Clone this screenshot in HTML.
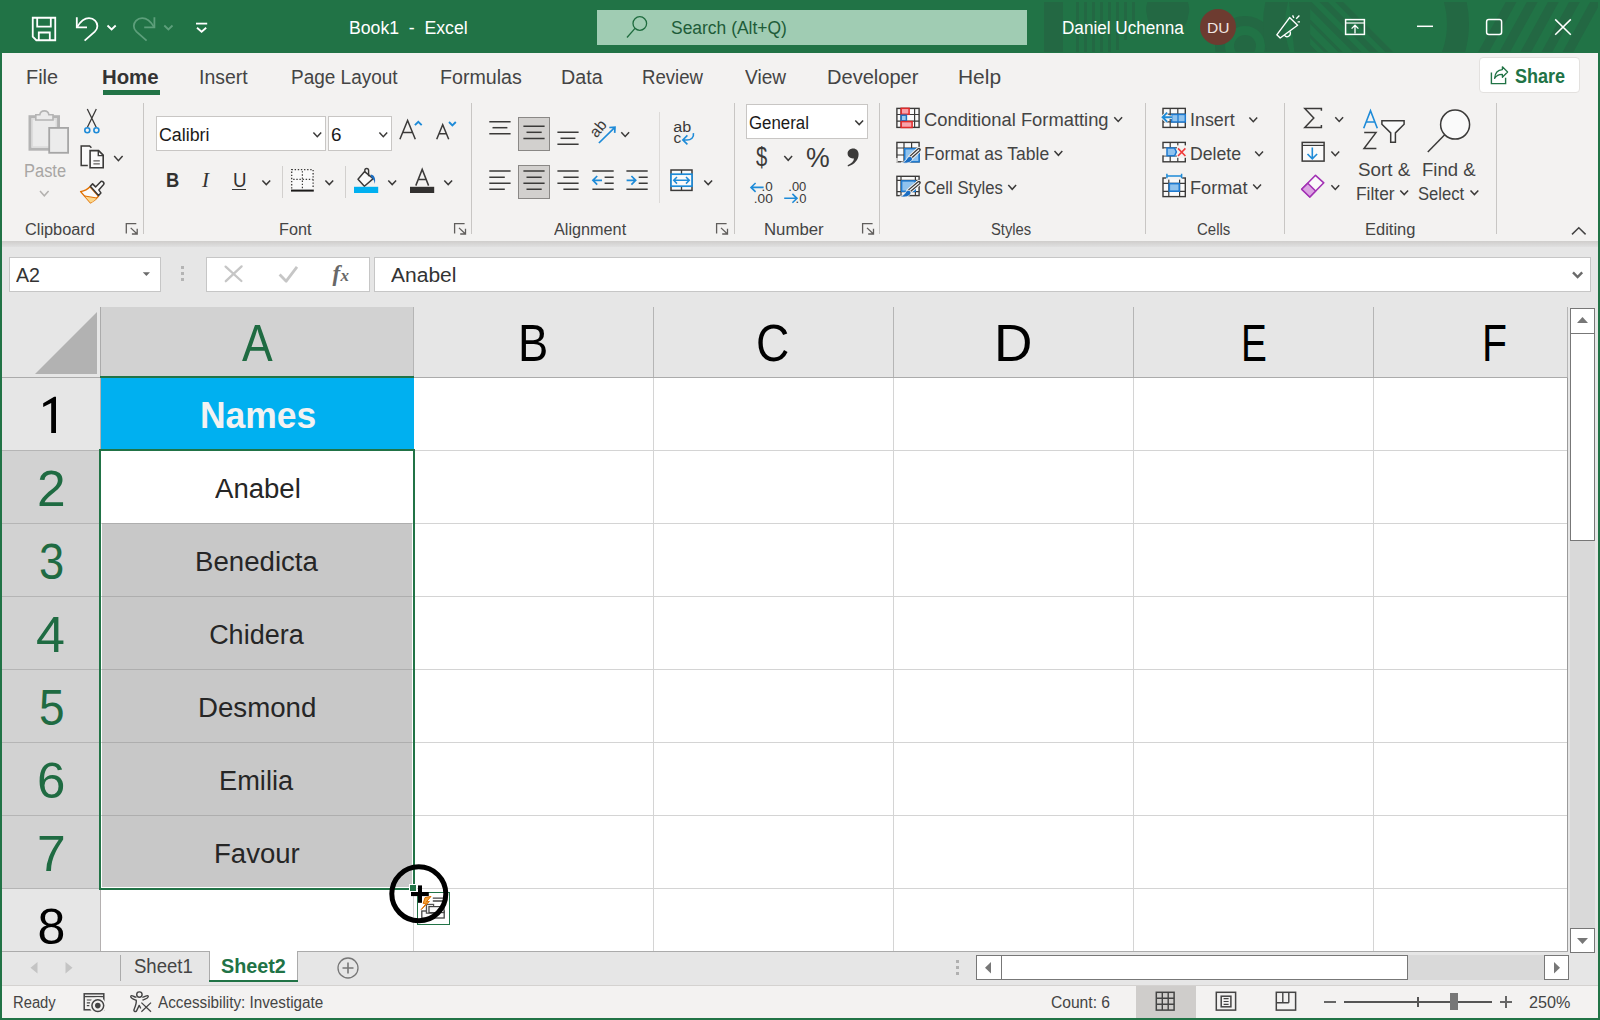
<!DOCTYPE html>
<html><head><meta charset="utf-8"><title>Book1 - Excel</title>
<style>
html,body{margin:0;padding:0}
body{width:1600px;height:1020px;overflow:hidden;position:relative;background:#fff;font-family:"Liberation Sans",sans-serif}
#w{position:absolute;left:0;top:0;width:1600px;height:1020px;overflow:hidden}
#w div,#w svg,#w span{position:absolute}
.t{white-space:pre;line-height:1;transform-origin:0 50%}
svg{overflow:visible}
</style></head>
<body><div id="w">
<div style="left:0px;top:0px;width:1600px;height:1020px;background:#217346;"></div>
<svg style="left:0;top:0" width="1600" height="53" viewBox="0 0 1600 53"><defs><clipPath id="tb"><rect x="2" y="2" width="1596" height="50"/></clipPath></defs><g clip-path="url(#tb)"><g fill="#236843"><rect x="1044" y="2" width="19" height="50"/><rect x="1076" y="2" width="3" height="50"/><rect x="1084" y="2" width="3" height="50"/><rect x="1092" y="2" width="3" height="50"/><rect x="1100" y="2" width="3" height="50"/><rect x="1108" y="2" width="3" height="50"/><rect x="1116" y="2" width="3" height="48"/><rect x="1124" y="2" width="3" height="38"/><rect x="1132" y="2" width="3" height="21"/><path d="M1147.5 2H1187.8A20.7 20.7 0 0 1 1188.3 15.3A20.7 20.7 0 0 1 1147 15.3A20.7 20.7 0 0 1 1147.5 2Z"/></g><g fill="none" stroke="#236843"><circle cx="1245" cy="46" r="25" stroke-width="10"/></g><circle cx="1245" cy="46" r="11" fill="#236843"/><circle cx="1366" cy="24" r="92" fill="none" stroke="#236843" stroke-width="22"/><path d="M1505.7 2H1516.5L1489.0 52H1478.2Z" fill="#236843"/><path d="M1526.8 2H1537.6L1510.1 52H1499.3Z" fill="#236843"/><path d="M1547.9 2H1558.7L1531.2 52H1520.4Z" fill="#236843"/><path d="M1569.0 2H1579.8L1552.3 52H1541.5Z" fill="#236843"/><path d="M1590.1 2H1600.9L1573.4 52H1562.6Z" fill="#236843"/><path d="M1289.1 2H1343.1L1393.1 52H1294.4Z" fill="#236843"/><clipPath id="mc"><rect x="1310.2" y="0" width="100" height="53"/></clipPath><g clip-path="url(#mc)"><path d="M1267.5 2H1274.0L1324.0 52H1317.5Z" fill="#217346"/><path d="M1278.1 2H1288.2L1338.2 52H1328.1Z" fill="#217346"/><path d="M1292.7 2H1302.9L1352.9 52H1342.7Z" fill="#217346"/><path d="M1311.4 2H1319.5L1369.5 52H1361.4Z" fill="#217346"/><path d="M1328.0 2H1335.4L1385.4 52H1378.0Z" fill="#217346"/></g></g></svg>
<div style="left:2px;top:53px;width:1596px;height:188px;background:#f3f2f1;"></div>
<div style="left:2px;top:241px;width:1596px;height:10px;background:linear-gradient(#cfcdcb,#d6d5d4 25%,#e0e0e0 60%,#e6e6e6);"></div>
<div style="left:2px;top:247px;width:1596px;height:704px;background:#e6e6e6;"></div>
<div style="left:2px;top:951px;width:1596px;height:35px;background:#e6e6e6;"></div>
<div style="left:2px;top:986px;width:1596px;height:32px;background:#f3f2f1;"></div>
<div style="left:597px;top:10px;width:430px;height:35px;background:#a0ccb3;"></div>
<div style="left:1200px;top:9px;width:36px;height:36px;background:#6d3b30;border-radius:50%"></div>
<div style="left:103px;top:90px;width:57px;height:5px;background:#217346;"></div>
<div style="left:1479px;top:57px;width:101px;height:36px;background:#fff;border:1px solid #e3e1df;border-radius:4px;box-sizing:border-box"></div>
<div style="left:143px;top:103px;width:1px;height:131px;background:#c8c6c4;"></div>
<div style="left:471px;top:103px;width:1px;height:131px;background:#c8c6c4;"></div>
<div style="left:734px;top:103px;width:1px;height:131px;background:#c8c6c4;"></div>
<div style="left:879px;top:103px;width:1px;height:131px;background:#c8c6c4;"></div>
<div style="left:1145px;top:103px;width:1px;height:131px;background:#c8c6c4;"></div>
<div style="left:1284px;top:103px;width:1px;height:131px;background:#c8c6c4;"></div>
<div style="left:1496px;top:103px;width:1px;height:131px;background:#c8c6c4;"></div>
<div style="left:156px;top:116px;width:170px;height:35px;background:#fff;border:1px solid #c8c6c4;box-sizing:border-box"></div>
<div style="left:328px;top:116px;width:64px;height:35px;background:#fff;border:1px solid #c8c6c4;box-sizing:border-box"></div>
<div style="left:232.4px;top:188.5px;width:13.8px;height:1.5px;background:#323130;"></div>
<div style="left:518px;top:117px;width:32px;height:34px;background:#d2d0ce;border:1px solid #8a8886;box-sizing:border-box"></div>
<div style="left:518px;top:165px;width:32px;height:34px;background:#d2d0ce;border:1px solid #8a8886;box-sizing:border-box"></div>
<div style="left:659px;top:112px;width:1px;height:91px;background:#dcdad8;"></div>
<div style="left:746px;top:104px;width:122px;height:35px;background:#fff;border:1px solid #c8c6c4;box-sizing:border-box"></div>
<div style="left:9px;top:257px;width:152px;height:35px;background:#fff;border:1px solid #c6c6c6;box-sizing:border-box"></div>
<div style="left:206px;top:257px;width:164px;height:35px;background:#fff;border:1px solid #c6c6c6;box-sizing:border-box"></div>
<div style="left:374px;top:257px;width:1217px;height:35px;background:#fff;border:1px solid #c6c6c6;box-sizing:border-box"></div>
<div style="left:100px;top:378px;width:1467px;height:573px;background:#fff;"></div>
<div style="left:100px;top:307px;width:314px;height:70px;background:#d2d2d2;"></div>
<div style="left:2px;top:451px;width:97px;height:438px;background:#d2d2d2;"></div>
<div style="left:413px;top:307px;width:1px;height:70px;background:#b5b5b5;"></div>
<div style="left:653px;top:307px;width:1px;height:70px;background:#b5b5b5;"></div>
<div style="left:893px;top:307px;width:1px;height:70px;background:#b5b5b5;"></div>
<div style="left:1133px;top:307px;width:1px;height:70px;background:#b5b5b5;"></div>
<div style="left:1373px;top:307px;width:1px;height:70px;background:#b5b5b5;"></div>
<div style="left:1567px;top:307px;width:1px;height:70px;background:#b5b5b5;"></div>
<div style="left:100px;top:307px;width:1px;height:70px;background:#ababab;"></div>
<div style="left:2px;top:377px;width:1566px;height:1px;background:#ababab;"></div>
<div style="left:100px;top:378px;width:1px;height:573px;background:#b4b0b0;"></div>
<div style="left:2px;top:450px;width:98px;height:1px;background:#b5b5b5;"></div>
<div style="left:2px;top:523px;width:98px;height:1px;background:#b5b5b5;"></div>
<div style="left:2px;top:596px;width:98px;height:1px;background:#b5b5b5;"></div>
<div style="left:2px;top:669px;width:98px;height:1px;background:#b5b5b5;"></div>
<div style="left:2px;top:742px;width:98px;height:1px;background:#b5b5b5;"></div>
<div style="left:2px;top:815px;width:98px;height:1px;background:#b5b5b5;"></div>
<div style="left:2px;top:888px;width:98px;height:1px;background:#b5b5b5;"></div>
<div style="left:413px;top:378px;width:1px;height:573px;background:#d4d4d4;"></div>
<div style="left:653px;top:378px;width:1px;height:573px;background:#d4d4d4;"></div>
<div style="left:893px;top:378px;width:1px;height:573px;background:#d4d4d4;"></div>
<div style="left:1133px;top:378px;width:1px;height:573px;background:#d4d4d4;"></div>
<div style="left:1373px;top:378px;width:1px;height:573px;background:#d4d4d4;"></div>
<div style="left:1567px;top:378px;width:1px;height:573px;background:#9a9a9a;"></div>
<div style="left:100px;top:450px;width:1467px;height:1px;background:#d4d4d4;"></div>
<div style="left:100px;top:523px;width:1467px;height:1px;background:#d4d4d4;"></div>
<div style="left:100px;top:596px;width:1467px;height:1px;background:#d4d4d4;"></div>
<div style="left:100px;top:669px;width:1467px;height:1px;background:#d4d4d4;"></div>
<div style="left:100px;top:742px;width:1467px;height:1px;background:#d4d4d4;"></div>
<div style="left:100px;top:815px;width:1467px;height:1px;background:#d4d4d4;"></div>
<div style="left:100px;top:888px;width:1467px;height:1px;background:#d4d4d4;"></div>
<div style="left:101px;top:378px;width:313px;height:72px;background:#00b0f0;"></div>
<div style="left:102px;top:523px;width:310px;height:364px;background:#c8c8c8;"></div>
<div style="left:102px;top:523px;width:310px;height:1px;background:#aeaeae;"></div>
<div style="left:102px;top:596px;width:310px;height:1px;background:#aeaeae;"></div>
<div style="left:102px;top:669px;width:310px;height:1px;background:#aeaeae;"></div>
<div style="left:102px;top:742px;width:310px;height:1px;background:#aeaeae;"></div>
<div style="left:102px;top:815px;width:310px;height:1px;background:#aeaeae;"></div>
<div style="left:100px;top:376px;width:314px;height:2px;background:#217346;"></div>
<div style="left:99px;top:449px;width:316px;height:2px;background:#217346;"></div>
<div style="left:99px;top:888px;width:316px;height:2px;background:#217346;"></div>
<div style="left:99px;top:449px;width:2px;height:441px;background:#217346;"></div>
<div style="left:413px;top:449px;width:2px;height:441px;background:#217346;"></div>
<div style="left:409px;top:884px;width:8px;height:8px;background:#fff;"></div>
<div style="left:410px;top:885px;width:6px;height:6px;background:#217346;"></div>
<svg style="left:34px;top:311px;" width="64" height="64" viewBox="0 0 64 64"><path d="M63 1V63H1Z" fill="#b2b2b2"/></svg>
<svg style="left:40px;top:390px;" width="20" height="46" viewBox="0 0 20 46"><path d="M16 6.8H14.2L3.2 13.3V17.1L11.2 12.9V42.9H16Z" fill="#000"/></svg>
<div style="left:1568px;top:307px;width:29px;height:644px;background:#e6e6e6;"></div>
<div style="left:1570px;top:334px;width:25px;height:594px;background:#d9d9d9;"></div>
<div style="left:1570px;top:308px;width:25px;height:26px;background:#fff;border:1px solid #777;box-sizing:border-box"></div>
<div style="left:1570px;top:333px;width:25px;height:208px;background:#fff;border:1px solid #777;box-sizing:border-box"></div>
<div style="left:1570px;top:928px;width:25px;height:25px;background:#fff;border:1px solid #777;box-sizing:border-box"></div>
<svg style="left:1577px;top:316px;" width="11" height="8" viewBox="0 0 11 8"><path d="M0 7L5.5 1L11 7Z" fill="#777"/></svg>
<svg style="left:1577px;top:937px;" width="11" height="8" viewBox="0 0 11 8"><path d="M0 1L5.5 7L11 1Z" fill="#777"/></svg>
<div style="left:2px;top:951px;width:1566px;height:1px;background:#ababab;"></div>
<div style="left:120px;top:955px;width:1px;height:26px;background:#ababab;"></div>
<div style="left:209px;top:951px;width:89px;height:31px;background:#fff;border-left:1px solid #ababab;border-right:1px solid #ababab;box-sizing:border-box"></div>
<div style="left:209px;top:980px;width:89px;height:2px;background:#217346;"></div>
<svg style="left:30px;top:962px;" width="8" height="12" viewBox="0 0 8 12"><path d="M7.5 0V11.5L0.5 5.75Z" fill="#c4c4c4"/></svg>
<svg style="left:65px;top:962px;" width="8" height="12" viewBox="0 0 8 12"><path d="M0.5 0V11.5L7.5 5.75Z" fill="#c4c4c4"/></svg>
<svg style="left:336px;top:956px;" width="24" height="24" viewBox="0 0 24 24"><circle cx="12" cy="12" r="10" fill="none" stroke="#777" stroke-width="1.3"/><path d="M12 6.5V17.5M6.5 12H17.5" stroke="#777" stroke-width="1.6"/></svg>
<div style="left:956px;top:960px;width:3px;height:3px;background:#b0b0b0;"></div>
<div style="left:956px;top:966px;width:3px;height:3px;background:#b0b0b0;"></div>
<div style="left:956px;top:972px;width:3px;height:3px;background:#b0b0b0;"></div>
<div style="left:1001px;top:955px;width:544px;height:25px;background:#d9d9d9;"></div>
<div style="left:976px;top:955px;width:26px;height:25px;background:#fff;border:1px solid #777;box-sizing:border-box"></div>
<div style="left:1001px;top:955px;width:407px;height:25px;background:#fff;border:1px solid #777;box-sizing:border-box"></div>
<div style="left:1544px;top:955px;width:25px;height:25px;background:#fff;border:1px solid #777;box-sizing:border-box"></div>
<svg style="left:984px;top:962px;" width="8" height="12" viewBox="0 0 8 12"><path d="M7 0V11.4L1 5.7Z" fill="#777"/></svg>
<svg style="left:1553px;top:962px;" width="8" height="12" viewBox="0 0 8 12"><path d="M1 0V11.4L7 5.7Z" fill="#777"/></svg>
<div style="left:2px;top:985px;width:1596px;height:1px;background:#d4d2d0;"></div>
<div style="left:1136px;top:986px;width:60px;height:32px;background:#cfcdcb;"></div>
<div style="left:1344px;top:1001px;width:148px;height:2px;background:#555;"></div>
<div style="left:1417px;top:997px;width:2px;height:10px;background:#555;"></div>
<div style="left:1450px;top:993px;width:8px;height:17px;background:#777;"></div>
<div style="left:1324px;top:1001px;width:12px;height:1.5px;background:#666;"></div>
<div style="left:1500px;top:1001px;width:12px;height:1.5px;background:#666;"></div>
<div style="left:1505.3px;top:996px;width:1.5px;height:12px;background:#666;"></div>
<svg style="left:32px;top:17px;" width="24" height="24" viewBox="0 0 24 24"><g stroke="#fff" fill="none" stroke-width="1.8"><path d="M0.75 0.75H23.25V23.25H4.3L0.75 19.7Z"/><path d="M5.2 0.75V9.6H18.8V0.75"/><path d="M6.8 23.25V15.5H17.8V23.25"/></g></svg>
<svg style="left:74px;top:15px;" width="44" height="28" viewBox="0 0 44 28"><g stroke="#fff" fill="none" stroke-width="1.8"><path d="M2.8 2.2V12.3H13"/><path d="M3.3 11.8C6.5 6.5 10.5 3.2 15 3.2C20 3.2 23.4 6.8 23.4 11C23.4 13.5 22.3 15.2 20.8 16.7L10.6 25.7"/><path d="M33.5 10.5L37.6 14.5L41.7 10.5"/></g></svg>
<svg style="left:131px;top:15px;" width="44" height="28" viewBox="0 0 44 28"><g stroke="#5d9f7b" fill="none" stroke-width="1.8"><path d="M23.4 2.2V12.3H13.2"/><path d="M22.9 11.8C19.7 6.5 15.7 3.2 11.2 3.2C6.2 3.2 2.8 6.8 2.8 11C2.8 13.5 3.9 15.2 5.4 16.7L15.6 25.7"/><path d="M33.3 10.5L37.4 14.5L41.5 10.5"/></g></svg>
<svg style="left:194px;top:20px;" width="16" height="14" viewBox="0 0 16 14"><g stroke="#fff" fill="none" stroke-width="1.8"><path d="M2 3.6H13.2"/><path d="M3 7.7L7.6 11.7L12.2 7.7"/></g></svg>
<svg style="left:624px;top:12px;" width="28" height="28" viewBox="0 0 28 28"><g stroke="#1e6b3e" fill="none" stroke-width="1.3"><circle cx="15.8" cy="11.5" r="6.8"/><path d="M11 16.4L3 25.5"/></g></svg>
<svg style="left:1274px;top:12px;" width="30" height="30" viewBox="0 0 30 30"><g stroke="#fff" fill="none" stroke-width="1.4" stroke-linejoin="round"><path d="M15.6 5.6L23.6 13.2L6.2 26L2.8 22.8Z"/><path d="M10.4 23.2A3 3 0 0 0 15.8 19.4"/><path d="M18.6 3.4L19.8 6M25.4 3.6L22.2 6.8M23.6 9.9H26"/></g></svg>
<svg style="left:1344px;top:18px;" width="22" height="18" viewBox="0 0 22 18"><g stroke="#fff" fill="none" stroke-width="1.5"><rect x="1.6" y="1.6" width="18.8" height="14.8"/><path d="M1.6 5H20.4" stroke-width="1.2"/><path d="M11 15.6V7.4M7.6 10.6L11 7.2L14.4 10.6" stroke-width="1.3"/></g></svg>
<svg style="left:1414px;top:20px;" width="22" height="12" viewBox="0 0 22 12"><path d="M3 6.3H19" stroke="#fff" fill="none" stroke-width="1.5"/></svg>
<svg style="left:1484px;top:17px;" width="20" height="20" viewBox="0 0 20 20"><rect x="2.6" y="2.5" width="15" height="15" rx="2.2" stroke="#fff" fill="none" stroke-width="1.5"/></svg>
<svg style="left:1553px;top:17px;" width="20" height="20" viewBox="0 0 20 20"><path d="M2.2 2.4L17.8 17.8M17.8 2.4L2.2 17.8" stroke="#fff" fill="none" stroke-width="1.5"/></svg>
<svg style="left:0;top:0" width="1600" height="260" viewBox="0 0 1600 260"><rect x="30" y="116.7" width="28.5" height="32.5" fill="#ebebeb" stroke="#b4b4b4" stroke-width="3"/><rect x="32.3" y="119" width="24" height="28" fill="none" stroke="#dcdcdc" stroke-width="1.6"/><path d="M35.8 120V114.8H39.8A4.6 4.6 0 0 1 48.9 114.8H53V120Z" fill="#ebebeb" stroke="#b4b4b4" stroke-width="1.6"/><rect x="49.2" y="127.9" width="18.9" height="24.9" fill="#ececec" stroke="#a6a6a6" stroke-width="1.8"/><path d="M40.0 191.0L44.3 195.8L48.6 191.0" stroke="#b3b1af" stroke-width="1.5" fill="none" /><path d="M87.3 109L96.2 127.2M96.3 109L87.4 127.2" stroke="#3b3a39" stroke-width="1.3" fill="none" /><circle cx="87.3" cy="130.2" r="2.5" fill="#f3f2f1" stroke="#1e8bd8" stroke-width="1.6"/><circle cx="96.4" cy="130.2" r="2.5" fill="#f3f2f1" stroke="#1e8bd8" stroke-width="1.6"/><path d="M87.8 165.4H81.2V146H89.6L91.4 147.8" stroke="#3b3a39" stroke-width="1.5" fill="#fafafa" /><path d="M90.1 150.6H98.6L103.2 155.2V167.8H90.1Z" stroke="#3b3a39" stroke-width="1.6" fill="#fafafa" /><path d="M98.3 150.8V155.6H103" stroke="#3b3a39" stroke-width="1.4" fill="none" /><path d="M93.4 160.9H99.8M93.4 163.9H99.8" stroke="#605e5c" stroke-width="1.2" fill="none" /><path d="M114.2 156.1L118.4 160.7L122.6 156.1" stroke="#3b3a39" stroke-width="1.5" fill="none" /><path d="M80.6 191.6C85 190.8 88 189 90 186.8L98.5 196.2C96.8 198.8 94 201.2 90.5 202.8Z" stroke="#e07000" stroke-width="1.4" fill="#fafafa" stroke-linejoin="round"/><path d="M84.8 196.2L96.6 198.2C95 200.2 93 201.6 90.5 202.8Z" stroke="none" stroke-width="0" fill="#fbd68a" /><path d="M84.8 196L96.8 198" stroke="#e07000" stroke-width="1.2" fill="none" /><path d="M90.3 186.2L92.6 183.9L95.6 186.9L100.2 182.2A1.5 1.5 0 0 1 103.4 184.8L98.8 189.9L100.9 192.9L98.6 195.4Z" stroke="#3b3a39" stroke-width="1.5" fill="#fafafa" stroke-linejoin="round"/><path d="M313.4 132.5L317.3 136.7L321.2 132.5" stroke="#3b3a39" stroke-width="1.5" fill="none" /><path d="M379.4 132.5L383.3 136.7L387.2 132.5" stroke="#3b3a39" stroke-width="1.5" fill="none" /><path d="M399.9 139.2L407.6 120.4L415.3 139.2M402.8 132.4H412.4" stroke="#3b3a39" stroke-width="1.5" fill="none" /><path d="M414.9 125.2L418.3 121.8L421.7 125.2" stroke="#1e8bd8" stroke-width="1.9" fill="none" /><path d="M436.7 139.2L442.7 124.6L448.7 139.2M438.9 133.8H446.5" stroke="#3b3a39" stroke-width="1.5" fill="none" /><path d="M449 122L452.4 125.4L455.8 122" stroke="#1e8bd8" stroke-width="1.9" fill="none" /><path d="M262.4 180.4L266.3 184.6L270.2 180.4" stroke="#3b3a39" stroke-width="1.5" fill="none" /><rect x="282" y="166" width="1" height="32" fill="#d2d0ce"/><rect x="345" y="166" width="1" height="32" fill="#d2d0ce"/><rect x="291.6" y="169.6" width="21.6" height="20" fill="#fafafa"/><path d="M291.7 188.6V169.7H313.1V188.6" stroke="#3b3a39" stroke-width="1.3" fill="none" stroke-dasharray="1.4 1.72"/><path d="M302.4 171.2V188.6M293.2 179.4H312.6" stroke="#3b3a39" stroke-width="1.2" fill="none" stroke-dasharray="1.4 1.72"/><rect x="291" y="189.6" width="22.8" height="2" fill="#1b1a19"/><path d="M325.4 180.4L329.3 184.6L333.2 180.4" stroke="#3b3a39" stroke-width="1.5" fill="none" /><path d="M364.6 171.6L373.2 178.6L364.4 186.2L358 179.2Z" stroke="#3b3a39" stroke-width="1.5" fill="#fafafa" stroke-linejoin="round"/><path d="M364.8 172.4V170.4A1.9 1.9 0 0 1 368.6 170.4V176.2" stroke="#3b3a39" stroke-width="1.4" fill="none" /><path d="M370.6 174.6C374.2 174.8 376 178.4 374.8 184C374.4 180.6 373.2 178.6 371.4 177.4Z" stroke="none" stroke-width="0" fill="#1a6dc2" /><rect x="354" y="186.8" width="24.2" height="6.2" fill="#00b0f0"/><path d="M388.3 180.4L392.2 184.6L396.1 180.4" stroke="#3b3a39" stroke-width="1.5" fill="none" /><path d="M415.8 185.6L422.2 169.4L428.6 185.6M418.2 179.6H426.2" stroke="#3b3a39" stroke-width="1.5" fill="none" /><rect x="410" y="186.8" width="24.2" height="6.2" fill="#323130"/><path d="M444.3 180.4L448.2 184.6L452.1 180.4" stroke="#3b3a39" stroke-width="1.5" fill="none" /><path d="M489.3 121.7H510.6M489.3 133.8H510.6" stroke="#3b3a39" stroke-width="1.5" fill="none" /><path d="M492.5 127.7H507.4" stroke="#3b3a39" stroke-width="1.5" fill="none" /><path d="M523.4 126.3H544.6M523.4 138.4H544.6" stroke="#3b3a39" stroke-width="1.5" fill="none" /><path d="M526.5 132.3H541.7" stroke="#3b3a39" stroke-width="1.5" fill="none" /><path d="M557.4 132.2H578.6M557.4 144.3H578.6" stroke="#3b3a39" stroke-width="1.5" fill="none" /><path d="M560.5 138.3H575.4" stroke="#3b3a39" stroke-width="1.5" fill="none" /><text x="0" y="0" transform="translate(596.4 138.4) rotate(-50)" font-family="Liberation Sans" font-size="15.5" fill="#3b3a39">ab</text><path d="M598.9 143L614.6 127.6M609.3 127.5L615 127.2L614.7 132.9" stroke="#1e8bd8" stroke-width="1.7" fill="none" /><path d="M621.3 132.2L625.2 136.4L629.1 132.2" stroke="#3b3a39" stroke-width="1.5" fill="none" /><path d="M489.3 171.1H510.6M489.3 183.3H510.6" stroke="#3b3a39" stroke-width="1.5" fill="none" /><path d="M489.3 177.3H504.8M489.3 189.3H504.8" stroke="#3b3a39" stroke-width="1.5" fill="none" /><path d="M523.4 171.1H544.6M523.4 183.3H544.6" stroke="#3b3a39" stroke-width="1.5" fill="none" /><path d="M526.5 177.3H541.7M526.5 189.3H541.7" stroke="#3b3a39" stroke-width="1.5" fill="none" /><path d="M557.4 171.1H578.6M557.4 183.3H578.6" stroke="#3b3a39" stroke-width="1.5" fill="none" /><path d="M563.4 177.3H578.6M563.4 189.3H578.6" stroke="#3b3a39" stroke-width="1.5" fill="none" /><path d="M592.4 171.1H613.7M592.4 189.3H613.7" stroke="#3b3a39" stroke-width="1.5" fill="none" /><path d="M604.6 177.3H613.7M604.6 183.3H613.7" stroke="#3b3a39" stroke-width="1.5" fill="none" /><path d="M602 180.3H593.2M597.2 176L592.9 180.3L597.2 184.6" stroke="#1e8bd8" stroke-width="1.7" fill="none" /><path d="M626.4 171.1H647.7M626.4 189.3H647.7" stroke="#3b3a39" stroke-width="1.5" fill="none" /><path d="M638.7 177.3H647.7M638.7 183.3H647.7" stroke="#3b3a39" stroke-width="1.5" fill="none" /><path d="M626.6 180.3H635.4M631.4 176L635.7 180.3L631.4 184.6" stroke="#1e8bd8" stroke-width="1.7" fill="none" /><text x="673.2" y="131.6" font-family="Liberation Sans" font-size="15.5" fill="#3b3a39" textLength="18" lengthAdjust="spacingAndGlyphs">ab</text><text x="673.4" y="143" font-family="Liberation Sans" font-size="15.5" fill="#3b3a39">c</text><path d="M693.4 133.2C694.2 137.6 691 140 687 140H683M687.4 135.4L682.8 139.9L687.4 144.4" stroke="#1e8bd8" stroke-width="1.6" fill="none" /><rect x="671" y="170" width="21" height="20.4" fill="#fafafa" stroke="#3b3a39" stroke-width="1.5"/><path d="M681.5 170V190.4" stroke="#3b3a39" stroke-width="1.3" fill="none" /><rect x="671" y="174.2" width="21" height="12" fill="#fafafa" stroke="#1e8bd8" stroke-width="1.7"/><path d="M674 180.3H689M677 177L673.7 180.3L677 183.6M686 177L689.3 180.3L686 183.6" stroke="#1e8bd8" stroke-width="1.5" fill="none" /><path d="M704.3 180.4L708.2 184.6L712.1 180.4" stroke="#3b3a39" stroke-width="1.5" fill="none" /><path d="M855.3 120.4L859.2 124.6L863.1 120.4" stroke="#3b3a39" stroke-width="1.5" fill="none" /><path d="M784.3 156.1L788.2 160.3L792.1 156.1" stroke="#3b3a39" stroke-width="1.5" fill="none" /><path d="M853.2 148.4C856.4 148.4 858.6 150.8 858.6 154.2C858.6 159.6 854.6 164.4 848 166.4L847.6 165.2C851.6 163.4 853.8 161 854 158.4C850.6 159 847.6 156.8 847.6 153.6C847.6 150.6 850 148.4 853.2 148.4Z" stroke="none" stroke-width="0" fill="#3b3a39" /><path d="M763.6 187.4H751.2M755.6 183L751 187.4L755.6 191.9" stroke="#1e8bd8" stroke-width="1.6" fill="none" /><path d="M784.2 198.3H796.6M792.4 193.9L797 198.3L792.4 202.8" stroke="#1e8bd8" stroke-width="1.6" fill="none" /><text x="761.6" y="190.6" font-family="Liberation Sans" font-size="12.6" fill="#3b3a39" textLength="11.2" lengthAdjust="spacingAndGlyphs">.0</text><text x="753.8" y="202.9" font-family="Liberation Sans" font-size="12.6" fill="#3b3a39" textLength="19" lengthAdjust="spacingAndGlyphs">.00</text><text x="788.3" y="190.6" font-family="Liberation Sans" font-size="12.6" fill="#3b3a39" textLength="18" lengthAdjust="spacingAndGlyphs">.00</text><text x="795.6" y="202.9" font-family="Liberation Sans" font-size="12.6" fill="#3b3a39" textLength="10.8" lengthAdjust="spacingAndGlyphs">.0</text><rect x="896.9" y="108.4" width="22.2" height="19.0" fill="#fafafa" stroke="#3b3a39" stroke-width="1.4"/><path d="M901 108.4V127.4M914.6 108.4V127.4M896.9 114.5H919.1M896.9 121.2H919.1" stroke="#3b3a39" stroke-width="1.2" fill="none" /><rect x="901.2" y="108.3" width="7.9" height="6" fill="#f8a3ab" stroke="#e02b2b" stroke-width="1.5"/><rect x="901.2" y="115.2" width="5.2" height="5.6" fill="#9ccbf0" stroke="#1e6fc0" stroke-width="1.5"/><rect x="901.2" y="121.6" width="10.9" height="5.9" fill="#f8a3ab" stroke="#e02b2b" stroke-width="1.5"/><rect x="896.9" y="142.4" width="22.2" height="19.4" fill="#fafafa" stroke="#3b3a39" stroke-width="1.4"/><path d="M904 142.4V161.8M911.6 142.4V161.8M896.9 148H919.1M896.9 155H919.1" stroke="#3b3a39" stroke-width="1.2" fill="none" /><rect x="904.7" y="148.7" width="14.4" height="13.1" fill="#90c3ee" stroke="#1e7ad0" stroke-width="1.5"/><path d="M896.2 158H897.6V162.6H896.2Z" stroke="none" stroke-width="0" fill="#f3f2f1" /><path d="M919.0 149.7L910.6 157.3" stroke="#f3f2f1" stroke-width="5.6" stroke-linecap="round"/><path d="M919.0 149.7L910.6 157.3" stroke="#3b3a39" stroke-width="3.7" stroke-linecap="round"/><path d="M918.7 150.0L911.5 156.4" stroke="#fafafa" stroke-width="1.2" stroke-linecap="round"/><path d="M901.2 162.3C904.6 161.9 906.2 160.3 907.2 157.9C909.2 155.5 912.2 156.3 912.6 159.1C911.2 162.9 905.8 164.3 901.2 162.3Z" fill="#1a6dc2" stroke="#f3f2f1" stroke-width="0.9"/><rect x="896.9" y="176.3" width="22.2" height="19.3" fill="#fafafa" stroke="#3b3a39" stroke-width="1.4"/><path d="M901 176.3V195.6M915.4 176.3V195.6M896.9 180.3H919.1M896.9 191.6H919.1" stroke="#3b3a39" stroke-width="1.2" fill="none" /><rect x="901.6" y="180.9" width="13.6" height="10.4" fill="#90c3ee" stroke="#1e7ad0" stroke-width="1.5"/><path d="M919.0 182.7L909.1 191.2" stroke="#f3f2f1" stroke-width="5.6" stroke-linecap="round"/><path d="M919.0 182.7L909.1 191.2" stroke="#3b3a39" stroke-width="3.7" stroke-linecap="round"/><path d="M918.7 183.0L910.0 190.3" stroke="#fafafa" stroke-width="1.2" stroke-linecap="round"/><path d="M899.7 196.2C903.1 195.8 904.7 194.2 905.7 191.8C907.7 189.4 910.7 190.2 911.1 193.0C909.7 196.8 904.3 198.2 899.7 196.2Z" fill="#1a6dc2" stroke="#f3f2f1" stroke-width="0.9"/><path d="M1114.3 117.2L1118.2 121.4L1122.1 117.2" stroke="#3b3a39" stroke-width="1.5" fill="none" /><path d="M1054.5 151.1L1058.4 155.3L1062.3 151.1" stroke="#3b3a39" stroke-width="1.5" fill="none" /><path d="M1008.3 185.1L1012.2 189.3L1016.1 185.1" stroke="#3b3a39" stroke-width="1.5" fill="none" /><rect x="1163" y="108.4" width="22.3" height="19.0" fill="#fafafa" stroke="#3b3a39" stroke-width="1.4"/><path d="M1170.2 108.4V127.4M1177.8 108.4V127.4M1163 114.2H1185.3M1163 121.8H1185.3" stroke="#3b3a39" stroke-width="1.2" fill="none" /><rect x="1171.6" y="114.4" width="13.7" height="7.6" fill="#90c3ee" stroke="#1e7ad0" stroke-width="1.5"/><path d="M1178 114.4V122" stroke="#1e7ad0" stroke-width="1.3" fill="none" /><path d="M1172 117.2H1163M1167.2 112.6L1162.6 117.2L1167.2 121.9" stroke="#f3f2f1" stroke-width="3.6" fill="none" /><path d="M1172 117.2H1163M1167.2 112.6L1162.6 117.2L1167.2 121.9" stroke="#1e8bd8" stroke-width="1.9" fill="none" /><path d="M1249.4 117.5L1253.3 121.7L1257.2 117.5" stroke="#3b3a39" stroke-width="1.5" fill="none" /><rect x="1163" y="142.4" width="22.3" height="19.4" fill="#fafafa" stroke="#3b3a39" stroke-width="1.4"/><path d="M1170.2 142.4V161.8M1177.8 142.4V161.8M1163 147.9H1185.3M1163 156H1185.3" stroke="#3b3a39" stroke-width="1.2" fill="none" /><rect x="1162" y="148.7" width="24.4" height="6.6" fill="#f3f2f1"/><rect x="1177" y="145.4" width="9.4" height="12.4" fill="#f3f2f1"/><path d="M1167 148.1H1174.6L1176.4 151.9L1174.6 155.8H1167Z" stroke="#1e7ad0" stroke-width="1.5" fill="#90c3ee" /><path d="M1178 148.4L1185.4 156M1185.4 148.4L1178 156" stroke="#f03a3a" stroke-width="1.6" fill="none" /><path d="M1255.2 151.5L1259.1 155.7L1263.0 151.5" stroke="#3b3a39" stroke-width="1.5" fill="none" /><rect x="1163" y="178" width="22.3" height="18.6" fill="#fafafa" stroke="#3b3a39" stroke-width="1.4"/><path d="M1168.8 178V196.6M1179.6 178V196.6M1163 183.4H1185.3M1163 191.4H1185.3" stroke="#3b3a39" stroke-width="1.2" fill="none" /><rect x="1166" y="176.4" width="16.2" height="3.2" fill="#f3f2f1"/><rect x="1169.3" y="183.6" width="10" height="7.6" fill="#90c3ee" stroke="#1e7ad0" stroke-width="1.6"/><path d="M1166.9 176H1181.6M1166.9 173.8V178.2M1181.6 173.8V178.2" stroke="#1e8bd8" stroke-width="1.5" fill="none" /><path d="M1253.2 184.5L1257.1 188.7L1261.0 184.5" stroke="#3b3a39" stroke-width="1.5" fill="none" /><path d="M1321.4 110.8V108.4H1304.8L1313.8 118L1304.8 127.5H1321.4V125.1" stroke="#3b3a39" stroke-width="1.5" fill="none" /><path d="M1335.3 117.3L1339.2 121.5L1343.1 117.3" stroke="#3b3a39" stroke-width="1.5" fill="none" /><rect x="1302.2" y="142.4" width="21.9" height="18.7" fill="#fafafa" stroke="#3b3a39" stroke-width="1.5"/><path d="M1302.2 145.4H1324.1" stroke="#3b3a39" stroke-width="1.2" fill="none" /><path d="M1312.3 147.6V158.8M1307.5 154L1312.3 158.9L1317.1 154" stroke="#1e8bd8" stroke-width="1.6" fill="none" /><path d="M1331.4 151.5L1335.3 155.7L1339.2 151.5" stroke="#3b3a39" stroke-width="1.5" fill="none" /><path d="M1301.7 189.2L1315.5 175.3L1323.8 182.8L1309.8 197Z" stroke="#a231b4" stroke-width="1.6" fill="#fafafa" stroke-linejoin="round"/><path d="M1301.7 189.2L1307.8 183.2L1315.6 191L1309.8 197Z" stroke="#a231b4" stroke-width="1.5" fill="#dba3e2" stroke-linejoin="round"/><path d="M1331.4 185.2L1335.3 189.4L1339.2 185.2" stroke="#3b3a39" stroke-width="1.5" fill="none" /><path d="M1363.7 128.2L1370.5 110.6L1377.3 128.2M1366.2 122H1374.8" stroke="#1e8bd8" stroke-width="1.6" fill="none" /><path d="M1364.2 132.6H1376L1364 148.5H1376.4" stroke="#3b3a39" stroke-width="1.5" fill="none" /><path d="M1381.9 120.7H1404.1V124.2L1395.4 132.9V142.2H1390.7V132.9L1381.9 124.2Z" stroke="#3b3a39" stroke-width="1.5" fill="#fafafa" /><circle cx="1455.1" cy="124.6" r="14.5" fill="#fafafa" stroke="#3b3a39" stroke-width="1.5"/><path d="M1444.7 134.8L1427.8 152" stroke="#3b3a39" stroke-width="1.5" fill="none" /><path d="M1400.3 190.4L1404.2 194.6L1408.1 190.4" stroke="#3b3a39" stroke-width="1.5" fill="none" /><path d="M1470.5 190.4L1474.4 194.6L1478.3 190.4" stroke="#3b3a39" stroke-width="1.5" fill="none" /></svg>
<svg style="left:0;top:0" width="1600" height="1020" viewBox="0 0 1600 1020"><path d="M1491.4 72.4V83.6H1505.6V77.8" stroke="#217346" stroke-width="1.4" fill="none" /><path d="M1494.6 78.4C1495 73 1498.2 69.8 1502.4 69.6V66.8L1507.6 72L1502.4 77.2V74.4C1498.8 74.2 1496.4 75.6 1494.6 78.4Z" stroke="#217346" stroke-width="1.3" fill="none" stroke-linejoin="round"/><path d="M142.8 272.2H150L146.4 275.9Z" stroke="none" stroke-width="0" fill="#6a6a6a" /><rect x="181" y="266" width="3" height="3" fill="#b4b4b4"/><rect x="181" y="272" width="3" height="3" fill="#b4b4b4"/><rect x="181" y="278" width="3" height="3" fill="#b4b4b4"/><path d="M225.6 266.6L241.4 281M241.6 266.4L225.8 281.2" stroke="#c6c6c6" stroke-width="2.3" fill="none" stroke-linecap="round"/><path d="M279.6 274.6L286.2 281.2L297 266.8" stroke="#c6c6c6" stroke-width="2.8" fill="none" stroke-linejoin="round"/><path d="M1573 272.4L1577.6 277L1582.2 272.4" stroke="#6a6a6a" stroke-width="2.4" fill="none" /><rect x="417.5" y="892.5" width="32" height="32" fill="#fff" stroke="#217346" stroke-width="1"/><path d="M432.8 898.2H444M432.8 901H444" stroke="#444" stroke-width="1.3" fill="none" /><rect x="421.8" y="911" width="22.4" height="7" fill="#fafafa" stroke="#444" stroke-width="1.3"/><rect x="426.4" y="904.4" width="7.2" height="8.8" fill="#e8e8e8" stroke="#555" stroke-width="1.2"/><rect x="429" y="906.6" width="15" height="6" fill="#fafafa" stroke="#444" stroke-width="1.2"/><path d="M431 896.4L425 897.6L423.2 903.6L426.4 903.2L421.2 909.6L429.4 901.4L426.4 901.8Z" stroke="#e07000" stroke-width="1" fill="#f4a63a" stroke-linejoin="round"/><rect x="418" y="885.4" width="4" height="17.4" fill="#000"/><rect x="411" y="892" width="17.8" height="4.1" fill="#000"/><circle cx="418.8" cy="893.8" r="27" fill="none" stroke="#000" stroke-width="5"/><rect x="84.2" y="993.8" width="19.6" height="16" fill="none" stroke="#444" stroke-width="1.5"/><path d="M84.2 996.6H103.8" stroke="#444" stroke-width="1.3" fill="none" /><path d="M86.8 1000H91.6M86.8 1002.9H90.2M86.8 1005.7H89.6" stroke="#444" stroke-width="1.2" fill="none" /><circle cx="97.8" cy="1005.6" r="8.3" fill="#f3f2f1"/><circle cx="97.8" cy="1005.6" r="5.9" fill="#f3f2f1" stroke="#444" stroke-width="1.5"/><circle cx="97.8" cy="1005.6" r="2.8" fill="#444"/><circle cx="139.4" cy="994.6" r="2.7" fill="none" stroke="#444" stroke-width="1.4"/><path d="M143 997.2C145.6 996.4 148.6 994.4 148.2 996.8C147.8 998.4 145.2 999 143 1000M135.8 997.2C133.4 996.4 130.4 994.4 130.8 996.8C131.2 998.6 134.2 999.4 136.2 1000.2C136.8 1003.4 135.2 1006.6 134 1009.6C133.4 1011.6 136 1012.4 136.8 1010.4L139.2 1005.4L140.6 1008" stroke="#444" stroke-width="1.4" fill="none" stroke-linecap="round" stroke-linejoin="round"/><path d="M141.4 1002.6L151 1011.8M151 1002.6L141.4 1011.8" stroke="#444" stroke-width="1.3" fill="none" /><rect x="1156.3" y="992.3" width="17.8" height="17.8" fill="none" stroke="#444" stroke-width="1.5"/><path d="M1162.3 992.3V1010.1M1168.2 992.3V1010.1M1156.3 998.3H1174.1M1156.3 1004.3H1174.1" stroke="#444" stroke-width="1.4" fill="none" /><rect x="1216.3" y="992.3" width="19.3" height="17.8" fill="none" stroke="#444" stroke-width="1.5"/><rect x="1221.2" y="996.2" width="9.7" height="10.6" fill="none" stroke="#444" stroke-width="1.5"/><path d="M1223.6 998.6H1228.6M1223.6 1001.5H1228.6M1223.6 1004.4H1228.6" stroke="#444" stroke-width="1.1" fill="none" /><rect x="1276.3" y="992.3" width="19.3" height="17.8" fill="none" stroke="#444" stroke-width="1.5"/><path d="M1282.8 992.3V1002.8M1288.8 992.3V1002.8M1276.3 1002.8H1288.8" stroke="#444" stroke-width="1.4" fill="none" /><path d="M136.3 223.6H126.3V233.6M130.7 227.9L136.9 233.7M137.2 228.8V234H131.9" stroke="#605e5c" stroke-width="1.3" fill="none" /><path d="M464.6 223.6H454.6V233.6M459.0 227.9L465.2 233.7M465.5 228.8V234H460.2" stroke="#605e5c" stroke-width="1.3" fill="none" /><path d="M726.6 223.6H716.6V233.6M721.0 227.9L727.2 233.7M727.5 228.8V234H722.2" stroke="#605e5c" stroke-width="1.3" fill="none" /><path d="M872.6 223.6H862.6V233.6M867.0 227.9L873.2 233.7M873.5 228.8V234H868.2" stroke="#605e5c" stroke-width="1.3" fill="none" /><path d="M1572 234.4L1578.8 227.8L1585.6 234.4" stroke="#444" stroke-width="1.5" fill="none" /></svg>
<span class="t" style="left:348.5535279805353px;top:19.20px;font-size:18px;color:#fff;transform:scaleX(0.9800);">Book1  -  Excel</span>
<span class="t" style="left:670.6973059849993px;top:19.20px;font-size:18px;color:#1e5c39;transform:scaleX(0.9694);">Search (Alt+Q)</span>
<span class="t" style="left:1061.5952516349162px;top:19.20px;font-size:18px;color:#fff;transform:scaleX(0.9517);">Daniel Uchenna</span>
<span class="t" style="left:1206.7237354085603px;top:20.80px;font-size:14.5px;color:#f0e6e2;transform:scaleX(1.0734);">DU</span>
<span class="t" style="left:25.87104377104377px;top:67.80px;font-size:19.4px;color:#444;transform:scaleX(1.0240);">File</span>
<span class="t" style="left:102.43597310422113px;top:67.80px;font-size:19.4px;color:#333;font-weight:700;transform:scaleX(1.0494);">Home</span>
<span class="t" style="left:199.0113238967527px;top:67.80px;font-size:19.4px;color:#444;transform:scaleX(1.0022);">Insert</span>
<span class="t" style="left:290.94219287135877px;top:67.80px;font-size:19.4px;color:#444;transform:scaleX(0.9793);">Page Layout</span>
<span class="t" style="left:439.89037037037036px;top:67.80px;font-size:19.4px;color:#444;transform:scaleX(1.0118);">Formulas</span>
<span class="t" style="left:560.884236453202px;top:67.80px;font-size:19.4px;color:#444;transform:scaleX(1.0157);">Data</span>
<span class="t" style="left:641.9748358862145px;top:67.80px;font-size:19.4px;color:#444;transform:scaleX(0.9587);">Review</span>
<span class="t" style="left:744.9044734389562px;top:67.80px;font-size:19.4px;color:#444;transform:scaleX(0.9848);">View</span>
<span class="t" style="left:826.8541152724827px;top:67.80px;font-size:19.4px;color:#444;transform:scaleX(1.0346);">Developer</span>
<span class="t" style="left:958.2819451629591px;top:67.80px;font-size:19.4px;color:#444;transform:scaleX(1.0800);">Help</span>
<span class="t" style="left:1515.4768041237114px;top:67.00px;font-size:19.5px;color:#217346;font-weight:700;transform:scaleX(0.9252);">Share</span>
<span class="t" style="left:25.16734693877551px;top:222.00px;font-size:16px;color:#444;transform:scaleX(1.0204);">Clipboard</span>
<span class="t" style="left:278.6705020920502px;top:222.00px;font-size:16px;color:#444;transform:scaleX(1.0133);">Font</span>
<span class="t" style="left:553.9675529517801px;top:222.00px;font-size:16px;color:#444;transform:scaleX(1.0140);">Alignment</span>
<span class="t" style="left:763.6246385193754px;top:222.00px;font-size:16px;color:#444;transform:scaleX(1.0483);">Number</span>
<span class="t" style="left:991.3207118515713px;top:222.00px;font-size:16px;color:#444;transform:scaleX(0.9229);">Styles</span>
<span class="t" style="left:1197.2359550561798px;top:222.00px;font-size:16px;color:#444;transform:scaleX(0.9363);">Cells</span>
<span class="t" style="left:1364.6478873239437px;top:222.00px;font-size:16px;color:#444;transform:scaleX(1.0306);">Editing</span>
<span class="t" style="left:23.65076100370218px;top:162.00px;font-size:18px;color:#a8a6a4;transform:scaleX(0.9141);">Paste</span>
<span class="t" style="left:158.69116347569954px;top:126.00px;font-size:18px;color:#1b1a19;transform:scaleX(0.9900);">Calibri</span>
<span class="t" style="left:330.73752711496746px;top:126.00px;font-size:18px;color:#1b1a19;transform:scaleX(1.0484);">6</span>
<span class="t" style="left:165.76983606557377px;top:170.60px;font-size:19.6px;color:#323130;font-weight:700;transform:scaleX(0.9368);">B</span>
<span class="t" style="left:202px;top:169.60px;font-size:21px;color:#323130;font-style:italic;font-family:'Liberation Serif',serif;">I</span>
<span class="t" style="left:232.56302816901407px;top:170.60px;font-size:19.6px;color:#323130;transform:scaleX(0.9521);">U</span>
<span class="t" style="left:748.6584302325581px;top:114.30px;font-size:18px;color:#1b1a19;transform:scaleX(0.9351);">General</span>
<span class="t" style="left:755.5775047258978px;top:142.40px;font-size:28.5px;color:#3b3a39;transform:scaleX(0.7097);">$</span>
<span class="t" style="left:806.140586797066px;top:143.30px;font-size:28.5px;color:#3b3a39;transform:scaleX(0.9351);">%</span>
<span class="t" style="left:923.5641025641025px;top:112.20px;font-size:17.6px;color:#444;transform:scaleX(1.0427);">Conditional Formatting</span>
<span class="t" style="left:923.5642704626334px;top:146.20px;font-size:17.6px;color:#444;transform:scaleX(0.9948);">Format as Table</span>
<span class="t" style="left:923.6476169937459px;top:180.20px;font-size:17.6px;color:#444;transform:scaleX(0.9496);">Cell Styles</span>
<span class="t" style="left:1189.553039134055px;top:112.20px;font-size:17.6px;color:#444;transform:scaleX(1.0171);">Insert</span>
<span class="t" style="left:1189.7492764109986px;top:146.20px;font-size:17.6px;color:#444;transform:scaleX(1.0052);">Delete</span>
<span class="t" style="left:1189.7107862248213px;top:180.20px;font-size:17.6px;color:#444;transform:scaleX(1.0319);">Format</span>
<span class="t" style="left:1357.7348546190651px;top:162.10px;font-size:17.6px;color:#444;transform:scaleX(1.0686);">Sort &amp;</span>
<span class="t" style="left:1355.7747527084316px;top:186.10px;font-size:17.6px;color:#444;transform:scaleX(0.9876);">Filter</span>
<span class="t" style="left:1422.378653295129px;top:162.10px;font-size:17.6px;color:#444;transform:scaleX(1.0541);">Find &amp;</span>
<span class="t" style="left:1417.8355832721936px;top:186.10px;font-size:17.6px;color:#444;transform:scaleX(0.9442);">Select</span>
<span class="t" style="left:15.960717335610589px;top:266.00px;font-size:19.4px;color:#333;transform:scaleX(1.0124);">A2</span>
<span class="t" style="left:390.9579638752053px;top:266.00px;font-size:19.4px;color:#333;transform:scaleX(1.0834);">Anabel</span>
<span class="t" style="left:332.5px;top:261.60px;font-size:23px;color:#686868;font-weight:700;font-style:italic;font-family:'Liberation Serif',serif;">f</span>
<span class="t" style="left:340.6px;top:266.60px;font-size:17px;color:#686868;font-weight:700;font-style:italic;font-family:'Liberation Serif',serif;">x</span>
<span class="t" style="left:241.9079939668175px;top:318.00px;font-size:51px;color:#1f6b42;transform:scaleX(0.9020);">A</span>
<span class="t" style="left:517.8853383458646px;top:318.00px;font-size:51px;color:#000;transform:scaleX(0.8883);">B</span>
<span class="t" style="left:756.4473933649289px;top:318.00px;font-size:51px;color:#000;transform:scaleX(0.9045);">C</span>
<span class="t" style="left:994.1368243243244px;top:318.00px;font-size:51px;color:#000;transform:scaleX(1.0433);">D</span>
<span class="t" style="left:1240.8228782287822px;top:318.00px;font-size:51px;color:#000;transform:scaleX(0.7597);">E</span>
<span class="t" style="left:1481.6462167689162px;top:318.00px;font-size:51px;color:#000;transform:scaleX(0.8020);">F</span>
<span class="t" style="left:37.12324561403509px;top:463.60px;font-size:50px;color:#1f6b42;transform:scaleX(1.0307);">2</span>
<span class="t" style="left:38.576371308016874px;top:536.60px;font-size:50px;color:#1f6b42;transform:scaleX(0.9072);">3</span>
<span class="t" style="left:36.40436507936508px;top:609.60px;font-size:50px;color:#1f6b42;transform:scaleX(1.0397);">4</span>
<span class="t" style="left:38.76033755274262px;top:682.60px;font-size:50px;color:#1f6b42;transform:scaleX(0.9198);">5</span>
<span class="t" style="left:37.1002169197397px;top:755.60px;font-size:50px;color:#1f6b42;transform:scaleX(1.0195);">6</span>
<span class="t" style="left:37.065934065934066px;top:828.60px;font-size:50px;color:#1f6b42;transform:scaleX(1.0330);">7</span>
<span class="t" style="left:37.550000000000004px;top:901.60px;font-size:50px;color:#000;">8</span>
<span class="t" style="left:199.62373896595207px;top:397.80px;font-size:36px;color:#f2f2f2;font-weight:700;transform:scaleX(0.9852);">Names</span>
<span class="t" style="left:215.34489326765188px;top:475.80px;font-size:27px;color:#262626;transform:scaleX(1.0205);">Anabel</span>
<span class="t" style="left:194.7349519010536px;top:548.80px;font-size:27px;color:#262626;transform:scaleX(1.0231);">Benedicta</span>
<span class="t" style="left:209.1256157635468px;top:621.80px;font-size:27px;color:#262626;">Chidera</span>
<span class="t" style="left:198.33280116110305px;top:694.80px;font-size:27px;color:#262626;transform:scaleX(1.0240);">Desmond</span>
<span class="t" style="left:218.86758803483528px;top:767.80px;font-size:27px;color:#262626;transform:scaleX(1.0083);">Emilia</span>
<span class="t" style="left:213.94112180550945px;top:840.80px;font-size:27px;color:#262626;transform:scaleX(1.0203);">Favour</span>
<span class="t" style="left:134.1470396877033px;top:957.00px;font-size:19.4px;color:#444;transform:scaleX(0.9558);">Sheet1</span>
<span class="t" style="left:220.92632398753895px;top:957.00px;font-size:19.4px;color:#217346;font-weight:700;transform:scaleX(1.0197);">Sheet2</span>
<span class="t" style="left:12.787673672960455px;top:995.00px;font-size:16px;color:#444;transform:scaleX(0.9240);">Ready</span>
<span class="t" style="left:157.96951445515197px;top:995.00px;font-size:16px;color:#444;transform:scaleX(0.9527);">Accessibility: Investigate</span>
<span class="t" style="left:1051.2042062415196px;top:995.00px;font-size:16px;color:#444;transform:scaleX(0.9752);">Count: 6</span>
<span class="t" style="left:1529.1909385113267px;top:995.00px;font-size:16px;color:#444;transform:scaleX(1.0113);">250%</span>
</div></body></html>
